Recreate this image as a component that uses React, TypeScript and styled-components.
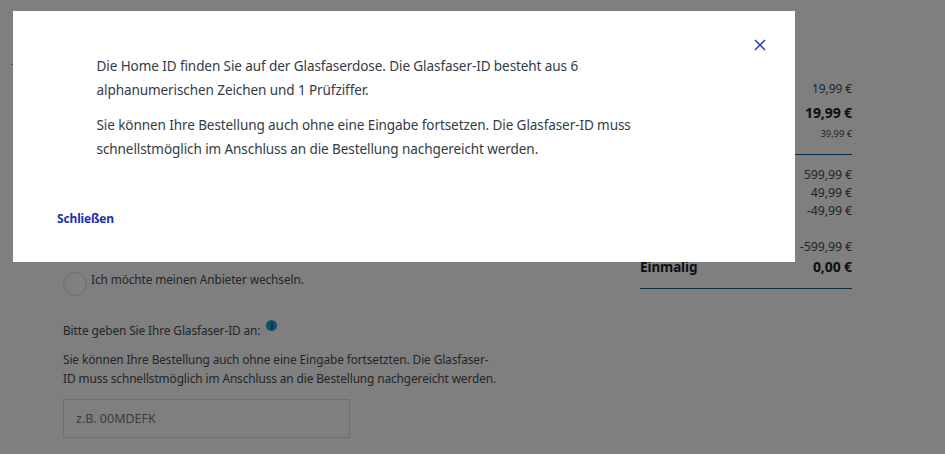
import * as React from 'react'
import styled, {createGlobalStyle} from 'styled-components'

const GlobalStyle = createGlobalStyle`
  html, body {
    margin: 0;
    height: 100%;
    overflow: hidden;
    background: #fff;
    font-family: "Noto Sans", "Open Sans", sans-serif;
  }
`

const Page = styled.div`
  display: grid;
  grid-template-columns: 577px 212px;
  height: 454px;
  box-sizing: border-box;
  padding: 0 0 0 63px;
  color: #474b50;
  font-size: 11.85px;
  letter-spacing: -0.1px;
`

const LeftColumn = styled.div`
  display: flex;
  flex-direction: column;
  padding-top: 64px;
`

const HeadRule = styled.hr`
  height: 1px;
  margin: 0 0 206px -52px;
  border: 0;
  background: #7fa8cf;
`

const RadioRow = styled.label`
  display: flex;
  align-items: flex-start;
  gap: 4px;
  line-height: 16px;
  height: 50px;
`

const RadioCircle = styled.span`
  width: 22px;
  height: 22px;
  margin-top: 1px;
  border: 1px solid #d8d8d8;
  border-radius: 50%;
`

const IdLabel = styled.p`
  display: flex;
  align-items: flex-start;
  gap: 6px;
  margin: 0 0 11px;
  line-height: 18px;
`

const InfoBadge = styled.span`
  width: 11px;
  height: 11px;
  margin-top: -1px;
  border-radius: 50%;
  background: #19a6c9;
  color: #0c2b3d;
  font-size: 8px;
  font-weight: 700;
  line-height: 11px;
  text-align: center;
`

const Hint = styled.p`
  width: 436px;
  margin: 0;
  line-height: 18.5px;
`

const IdInput = styled.input`
  width: 287px;
  height: 39px;
  margin-top: 12px;
  padding: 0 12px;
  box-sizing: border-box;
  border: 1px solid #dcdcdc;
  background: transparent;
  font: 12.5px "Noto Sans", sans-serif;
  &::placeholder {
    color: #7a7a7a;
    opacity: 1;
  }
`

const Summary = styled.div`
  display: flex;
  flex-direction: column;
  padding-top: 79px;
`

const PriceRow = styled.div<{$size?: number; $bold?: boolean; $height: number; $gap?: number}>`
  display: flex;
  justify-content: space-between;
  align-items: center;
  height: ${(p) => p.$height}px;
  margin-top: ${(p) => p.$gap ?? 0}px;
  color: ${(p) => (p.$bold ? '#1c1e22' : 'inherit')};
  font-size: ${(p) => p.$size ?? 12.4}px;
  font-weight: ${(p) => (p.$bold ? 700 : 400)};
`

const TotalLabel = styled.span`
  font-size: 13.5px;
`

const Rule = styled.hr<{$top: number; $bottom: number}>`
  width: 100%;
  height: 1px;
  margin: ${(p) => p.$top}px 0 ${(p) => p.$bottom}px;
  border: 0;
  background: #0d5a99;
`

const Backdrop = styled.div`
  position: fixed;
  inset: 0;
  background: rgba(0, 0, 0, 0.5);
`

const Dialog = styled.div`
  position: fixed;
  top: 11px;
  left: 13px;
  width: 782px;
  height: 251px;
  box-sizing: border-box;
  padding: 44px 44px 0;
  background: #fff;
`

const DialogBody = styled.div`
  width: 560px;
  margin-left: 39.5px;
  color: #333b45;
  font-size: 13.55px;
  letter-spacing: -0.1px;
  line-height: 23.5px;
  p {
    margin: 0 0 12px;
  }
`

const CloseLink = styled.a`
  display: block;
  margin-top: 49px;
  color: #1a2fb0;
  font-size: 12px;
  font-weight: 700;
  letter-spacing: -0.15px;
  line-height: 18px;
`

const CloseIcon = styled.svg`
  position: absolute;
  top: 28px;
  right: 29px;
  width: 12px;
  height: 12px;
`

export default function App(): JSX.Element {
  return (
    <>
      <GlobalStyle />
      <Page>
        <LeftColumn>
          <HeadRule />
          <RadioRow>
            <RadioCircle />
            Ich möchte meinen Anbieter wechseln.
          </RadioRow>
          <IdLabel>
            Bitte geben Sie Ihre Glasfaser-ID an: <InfoBadge>i</InfoBadge>
          </IdLabel>
          <Hint>
            Sie können Ihre Bestellung auch ohne eine Eingabe fortsetzten. Die Glasfaser-ID muss
            schnellstmöglich im Anschluss an die Bestellung nachgereicht werden.
          </Hint>
          <IdInput placeholder="z.B. 00MDEFK" />
        </LeftColumn>
        <Summary>
          <PriceRow $height={18} $size={12}><span />19,99 €</PriceRow>
          <PriceRow $size={14} $bold $height={30}><span />19,99 €</PriceRow>
          <PriceRow $size={9.5} $height={12}><span />39,99 €</PriceRow>
          <Rule $top={15} $bottom={10} />
          <PriceRow $height={18.3}><span />599,99 €</PriceRow>
          <PriceRow $height={18.3}><span />49,99 €</PriceRow>
          <PriceRow $height={18.3}><span />-49,99 €</PriceRow>
          <PriceRow $height={18} $gap={18}><span />-599,99 €</PriceRow>
          <PriceRow $size={14} $bold $height={22}>
            <TotalLabel>Einmalig</TotalLabel>
            <span>0,00 €</span>
          </PriceRow>
          <Rule $top={10} $bottom={0} />
        </Summary>
      </Page>
      <Backdrop />
      <Dialog>
        <CloseIcon viewBox="0 0 12 12">
          <path d="M1 1 L11 11 M11 1 L1 11" stroke="#1a2fb0" strokeWidth="1.3" fill="none" />
        </CloseIcon>
        <DialogBody>
          <p>
            Die Home ID finden Sie auf der Glasfaserdose. Die Glasfaser-ID besteht aus 6
            alphanumerischen Zeichen und 1 Prüfziffer.
          </p>
          <p>
            Sie können Ihre Bestellung auch ohne eine Eingabe fortsetzen. Die Glasfaser-ID muss
            schnellstmöglich im Anschluss an die Bestellung nachgereicht werden.
          </p>
        </DialogBody>
        <CloseLink>Schließen</CloseLink>
      </Dialog>
    </>
  )
}
